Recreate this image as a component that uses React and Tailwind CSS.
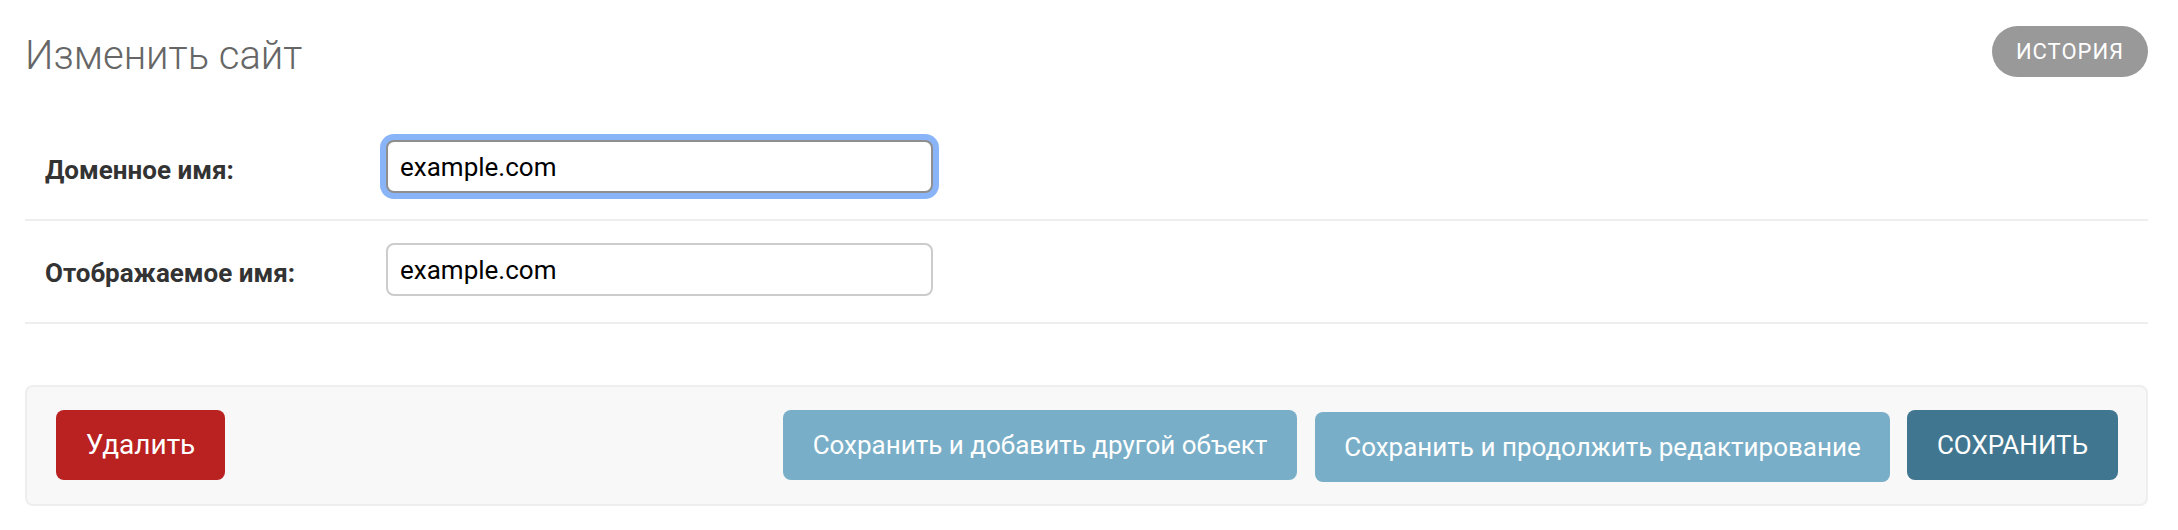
export default function App() {
  const fields = [
    { label: 'Доменное имя:', value: 'example.com', focused: true },
    { label: 'Отображаемое имя:', value: 'example.com', focused: false },
  ]

  return (
    <div className="min-h-[530px] bg-white font-['Roboto','Liberation_Sans',sans-serif] pl-[25px] pr-[30px]">
      <div className="flex justify-between items-start h-[118px]">
        <h1 className="mt-[36px] text-[40px] leading-[40px] font-light text-[#666]">Изменить сайт</h1>
        <a className="mt-[26px] h-[51px] w-[156px] rounded-full bg-[#999] text-white text-[22px] tracking-[1px] flex items-center justify-center">
          ИСТОРИЯ
        </a>
      </div>

      {fields.map((f) => (
        <div key={f.label} className="flex items-start pt-[22px] pb-[26px] border-b-2 border-[#eee]">
          <label className="w-[361px] shrink-0 pl-[20px] mt-[14px] text-[26px] leading-[32px] font-bold text-[#333]">
            {f.label}
          </label>
          <input
            type="text"
            readOnly
            defaultValue={f.value}
            className={
              f.focused
                ? 'w-[547px] h-[53px] px-[12px] text-[26px] text-black bg-white border-2 border-[#8f8f8f] rounded-[8px] shadow-[0_0_0_6px_#8ab4f8] outline-none'
                : 'w-[547px] h-[53px] px-[12px] text-[26px] text-black bg-white border-2 border-[#ccc] rounded-[8px] outline-none'
            }
          />
        </div>
      ))}

      <div className="mt-[61px] flex justify-between items-start border-2 border-[#eee] bg-[#f8f8f8] rounded-[8px] pt-[23px] pb-[22px] pl-[29px] pr-[28px]">
        <a className="w-[169px] h-[70px] rounded-[8px] bg-[#ba2121] text-white text-[28px] flex items-center justify-center">
          Удалить
        </a>
        <div className="flex items-start">
          <button className="w-[514px] h-[70px] rounded-[8px] bg-[#79aec8] text-white text-[26px]">
            Сохранить и добавить другой объект
          </button>
          <button className="ml-[18px] mt-[2px] w-[575px] h-[70px] rounded-[8px] bg-[#79aec8] text-white text-[26px]">
            Сохранить и продолжить редактирование
          </button>
          <button className="ml-[17px] w-[211px] h-[70px] rounded-[8px] bg-[#417690] text-white text-[26px]">
            СОХРАНИТЬ
          </button>
        </div>
      </div>
    </div>
  )
}
